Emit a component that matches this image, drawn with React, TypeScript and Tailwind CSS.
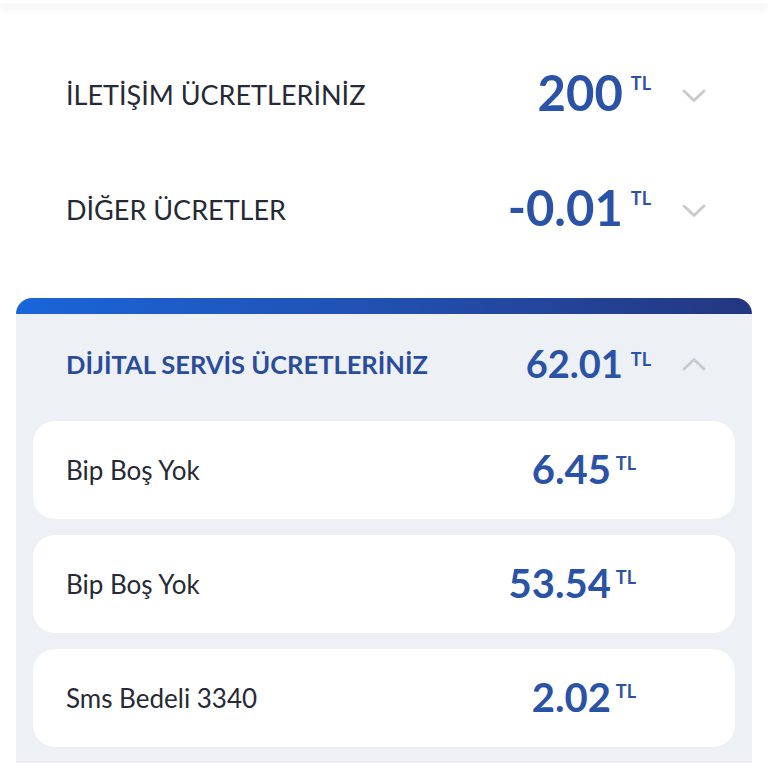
import React from "react";

interface Item {
  label: string;
  amount: string;
}

const items: Item[] = [
  { label: "Bip Boş Yok", amount: "6.45" },
  { label: "Bip Boş Yok", amount: "53.54" },
  { label: "Sms Bedeli 3340", amount: "2.02" },
];

function Chevron({ up = false }: { up?: boolean }) {
  return (
    <svg width="24" height="14" viewBox="0 0 24 14" fill="none" className="shrink-0">
      <polyline
        points={up ? "2,12 12,2.5 22,12" : "2,2 12,11.5 22,2"}
        stroke="#cbcbcb"
        strokeWidth="3"
        strokeLinecap="round"
        strokeLinejoin="round"
      />
    </svg>
  );
}

function Amount({ value, size }: { value: string; size: "lg" | "md" | "sm" }) {
  const num =
    size === "lg"
      ? "text-[49px] font-bold leading-none"
      : size === "md"
      ? "text-[38px] font-bold leading-none"
      : "text-[40px] font-bold leading-none";
  return (
    <div className={size === "lg" ? "mb-[6px] flex items-start text-[#2a52a6]" : "mb-[3px] flex items-start text-[#2a52a6]"}>
      <span className={num}>{value}</span>
      <span
        className={
          size === "sm"
            ? "ml-[5px] mt-[5px] text-[18px] font-bold leading-none"
            : "ml-[8px] mt-[6px] text-[18px] font-bold leading-none"
        }
      >
        TL
      </span>
    </div>
  );
}

function SummaryRow({ title, value }: { title: string; value: string }) {
  return (
    <div className="flex h-[115px] items-center pl-[66px] pr-[62px]">
      <div className="flex-1 text-[27px] text-[#262a36]">{title}</div>
      <Amount value={value} size="lg" />
      <div className="ml-[31px]">
        <Chevron />
      </div>
    </div>
  );
}

export default function App() {
  return (
    <div className="min-h-[768px] w-[768px] bg-white font-['Lato',sans-serif]">
      <div className="relative z-10 h-[3px] bg-white shadow-[0_3px_10px_rgba(0,0,0,0.13)]" />

      <div className="pt-[35px]">
        <SummaryRow title="İLETİŞİM ÜCRETLERİNİZ" value="200" />
        <SummaryRow title="DİĞER ÜCRETLER" value="-0.01" />
      </div>

      <div className="mx-[16px] mt-[30px] overflow-hidden rounded-t-[16px] bg-[#edf0f4] pb-[16px]">
        <div className="h-[16px] bg-gradient-to-r from-[#1865da] via-[#2150b0] to-[#233780]" />

        <div className="flex h-[100px] items-center pl-[50px] pr-[46px]">
          <div className="flex-1 text-[25.5px] font-bold text-[#2a4c9c]">DİJİTAL SERVİS ÜCRETLERİNİZ</div>
          <Amount value="62.01" size="md" />
          <div className="ml-[31px]">
            <Chevron up />
          </div>
        </div>

        <div className="mt-[7px] flex flex-col gap-[16px] px-[17px]">
          {items.map((item, index) => (
            <div
              key={index}
              className="flex h-[98px] items-center rounded-[22px] bg-white pl-[33px] pr-[99px]"
            >
              <div className="flex-1 text-[26px] text-[#262a36]">{item.label}</div>
              <Amount value={item.amount} size="sm" />
            </div>
          ))}
        </div>
      </div>
    </div>
  );
}
